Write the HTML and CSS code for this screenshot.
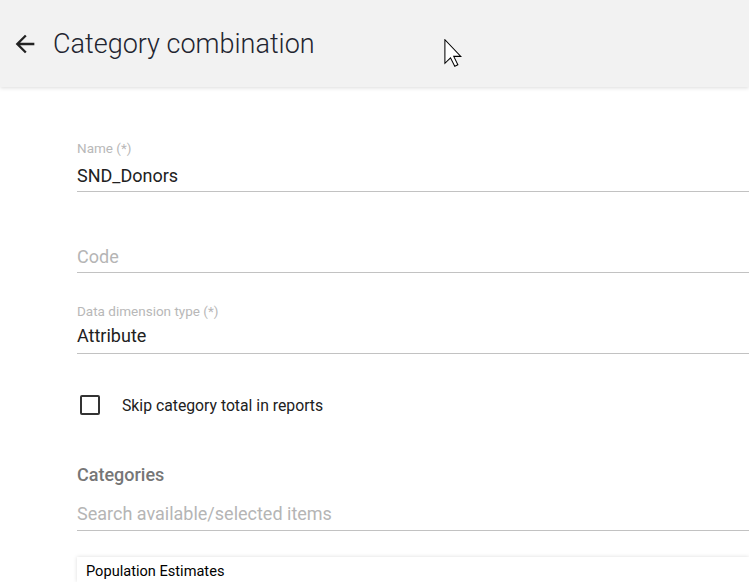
FILE: index.html
```html
<!DOCTYPE html>
<html lang="en">
<head>
<meta charset="utf-8">
<title>Category combination</title>
<link rel="stylesheet" href="styles.css">
</head>
<body>
<header class="topbar">
  <svg class="back" viewBox="0 0 24 24" width="28" height="28" aria-hidden="true"><path d="M20 11H7.83l5.59-5.59L12 4l-8 8 8 8 1.41-1.41L7.83 13H20v-2z"/></svg>
  <h1 class="title">Category combination</h1>
</header>
<main class="form">
  <div class="field field-name">
    <div class="label">Name (*)</div>
    <div class="value">SND_Donors</div>
  </div>
  <div class="field field-code">
    <div class="placeholder">Code</div>
  </div>
  <div class="field field-type">
    <div class="label">Data dimension type (*)</div>
    <div class="value">Attribute</div>
  </div>
  <div class="check-row">
    <span class="checkbox"></span>
    <span class="check-label">Skip category total in reports</span>
  </div>
  <div class="section-title">Categories</div>
  <div class="field field-search">
    <div class="placeholder">Search available/selected items</div>
  </div>
  <div class="list-box">
    <div class="list-item">Population Estimates</div>
  </div>
</main>
<svg class="cursor" viewBox="0 0 12 19" width="18" height="28" aria-hidden="true"><path d="M0.5 0.5 L0.5 16.5 L4.3 12.8 L7.2 18.5 L9.3 17.5 L6.5 11.8 L11.3 11.8 Z" fill="#fff" stroke="#000" stroke-width="0.7" stroke-linejoin="miter"/></svg>
</body>
</html>
```

FILE: styles.css
```css
html, body {
  margin: 0;
  padding: 0;
  background: #ffffff;
  font-family: Roboto, "Liberation Sans", Arial, sans-serif;
  overflow: hidden;
}

.topbar {
  height: 87px;
  background: #f2f2f2;
  box-shadow: 0 1px 4px rgba(0, 0, 0, 0.14);
  display: flex;
  align-items: center;
  position: relative;
  z-index: 1;
}

.back {
  margin-left: 11px;
  fill: #222;
  flex: none;
}

.title {
  margin: 1px 0 0 14px;
  font-size: 27px;
  font-weight: 300;
  color: #1f2530;
  line-height: 32px;
}

.form {
  padding: 53px 0 0 77px;
}

.field {
  border-bottom: 1px solid #c2c2c2;
}

.label {
  font-size: 13.5px;
  line-height: 16px;
  color: #b8b8b8;
}

.value {
  font-size: 18px;
  line-height: 22px;
  color: #212121;
}

.placeholder {
  font-size: 18px;
  line-height: 22px;
  color: #b5b5b5;
}

.field-name .value {
  margin-top: 9px;
}
.field-name {
  padding-bottom: 4px;
}

.field-code {
  margin-top: 54px;
  padding-bottom: 4px;
}

.field-type {
  margin-top: 30px;
  padding-bottom: 6px;
}
.field-type .value {
  margin-top: 6px;
}

.check-row {
  margin-top: 39px;
  height: 24px;
  display: flex;
  align-items: center;
}

.checkbox {
  width: 16px;
  height: 16px;
  border: 2px solid #333;
  border-radius: 2px;
  margin-left: 3px;
  flex: none;
}

.check-label {
  margin-left: 22px;
  font-size: 15.75px;
  color: #212121;
}

.section-title {
  margin-top: 47px;
  font-size: 18px;
  line-height: 22px;
  font-weight: 500;
  color: #767676;
}

.field-search {
  margin-top: 17px;
  padding-bottom: 5px;
}

.list-box {
  margin-top: 26px;
  background: #fff;
  box-shadow: 0 0 4px rgba(0, 0, 0, 0.14);
  height: 25px;
}

.list-item {
  padding: 5px 0 0 9px;
  font-size: 14.6px;
  line-height: 18px;
  color: #000;
}

.cursor {
  position: absolute;
  left: 444px;
  top: 39px;
  z-index: 2;
}
```
